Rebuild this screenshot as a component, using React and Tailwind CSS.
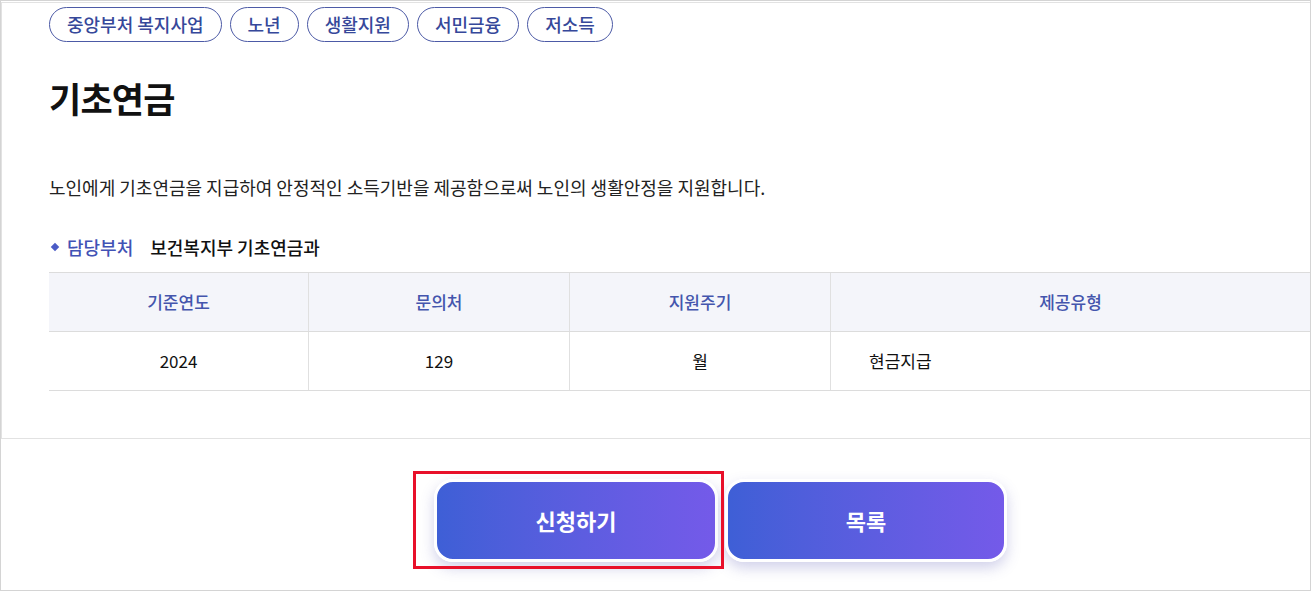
import React from "react";

const chips = ["중앙부처 복지사업", "노년", "생활지원", "서민금융", "저소득"];

export default function App() {
  return (
    <div
      className="w-[1311px] h-[591px] bg-white border border-[#d4d4d4] overflow-hidden flex flex-col"
      style={{ fontFamily: '"Noto Sans CJK KR", "Noto Sans", sans-serif' }}
    >
      <div className="h-[437px] mt-[1px] border-l border-t border-b border-[#e2e2e2] bg-white flex flex-col pl-[47px]">
        <div className="flex gap-[8px] mt-[4px]">
          {chips.map((c) => (
            <span
              key={c}
              className="h-[35px] px-[17px] flex items-center rounded-full border border-[#4c5aa6] text-[#36489a] text-[18px] font-medium"
            >
              {c}
            </span>
          ))}
        </div>
        <h1 className="mt-[34px] text-[35px] leading-[44px] font-bold text-[#111] tracking-[-0.8px]">기초연금</h1>
        <p className="mt-[53px] text-[18px] leading-[28px] text-[#222]">
          노인에게 기초연금을 지급하여 안정적인 소득기반을 제공함으로써 노인의 생활안정을 지원합니다.
        </p>
        <div className="mt-[33px] flex items-center text-[18px] leading-[26px]">
          <span className="w-[6px] h-[6px] bg-[#4b5bc6] rotate-45 ml-[3px] mr-[9px]"></span>
          <span className="font-medium text-[#4152b5]">담당부처</span>
          <span className="ml-[17px] font-medium text-[#111]">보건복지부 기초연금과</span>
        </div>
        <div className="mt-[12px] border-t border-b border-[#dcdcdc] flex flex-col text-[17px]">
          <div className="grid grid-cols-[260px_261px_261px_1fr] h-[59px] bg-[#f4f5fa] text-[#4455ad] font-medium border-b border-[#dcdcdc]">
            <div className="flex items-center justify-center border-r border-[#e0e0e0]">기준연도</div>
            <div className="flex items-center justify-center border-r border-[#e0e0e0]">문의처</div>
            <div className="flex items-center justify-center border-r border-[#e0e0e0]">지원주기</div>
            <div className="flex items-center justify-center">제공유형</div>
          </div>
          <div className="grid grid-cols-[260px_261px_261px_1fr] h-[58px] text-[#111]">
            <div className="flex items-center justify-center border-r border-[#e0e0e0]">2024</div>
            <div className="flex items-center justify-center border-r border-[#e0e0e0]">129</div>
            <div className="flex items-center justify-center border-r border-[#e0e0e0]">월</div>
            <div className="flex items-center pl-[38px]">현금지급</div>
          </div>
        </div>
      </div>
      <div className="flex-1 flex items-start pl-[433px] pt-[40px]">
        <div className="relative flex gap-[7px]">
          <button className="w-[284px] h-[83px] rounded-[19px] border-[3px] border-white bg-gradient-to-r from-[#3e5fd6] to-[#745ae9] text-white text-[22px] font-bold shadow-[0_6px_14px_rgba(90,90,180,0.28)]">
            신청하기
          </button>
          <button className="w-[282px] h-[83px] rounded-[19px] border-[3px] border-white bg-gradient-to-r from-[#3e5fd6] to-[#745ae9] text-white text-[22px] font-bold shadow-[0_6px_14px_rgba(90,90,180,0.28)]">
            목록
          </button>
          <div className="absolute left-[-21px] top-[-8px] w-[311px] h-[98px] border-[3px] border-[#e8102a] pointer-events-none"></div>
        </div>
      </div>
    </div>
  );
}
